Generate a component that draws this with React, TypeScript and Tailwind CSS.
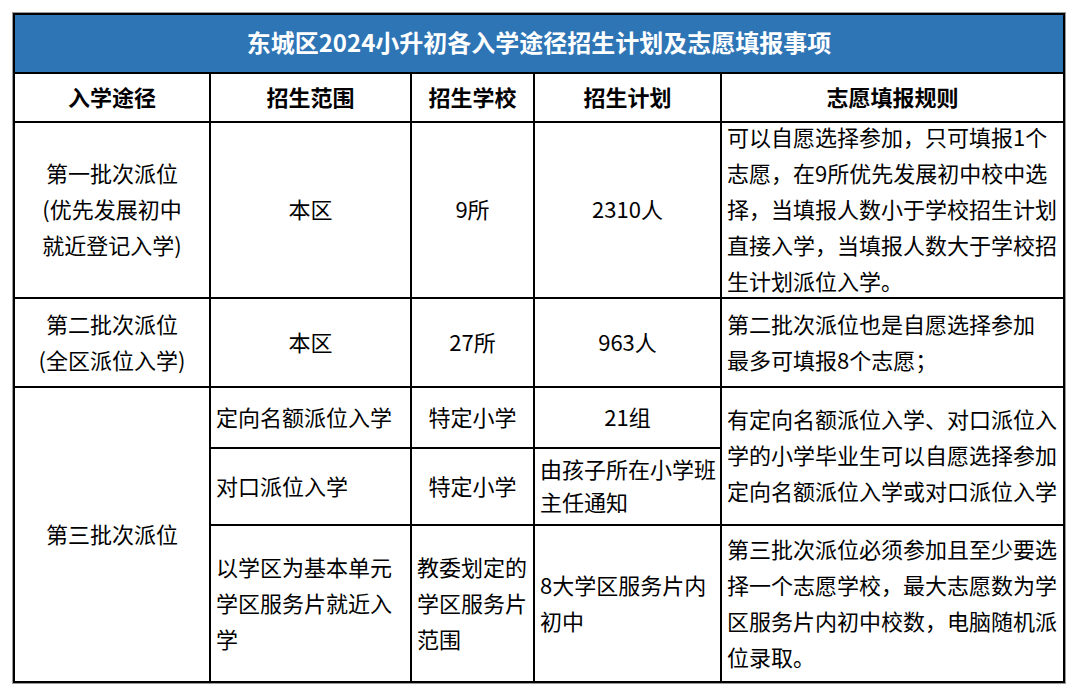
import React from "react";

const font = { fontFamily: '"Noto Sans CJK SC", "Noto Sans", sans-serif' };

function Lines({ lines }: { lines: string[] }) {
  return (
    <div>
      {lines.map((l, i) => (
        <div key={i} className="whitespace-nowrap">
          {l}
        </div>
      ))}
    </div>
  );
}

function C({
  children,
  className = "",
}: {
  children: React.ReactNode;
  className?: string;
}) {
  return (
    <div className={`bg-white flex items-center justify-center text-center pb-[4px] ${className}`}>
      {children}
    </div>
  );
}

function L({
  children,
  className = "",
}: {
  children: React.ReactNode;
  className?: string;
}) {
  return (
    <div className={`bg-white flex items-center justify-start text-left pl-[5px] pb-[4px] ${className}`}>
      {children}
    </div>
  );
}

export default function App() {
  return (
    <div className="w-[1080px] h-[697px] bg-white overflow-hidden" style={font}>
      <div className="ml-[13px] mt-[13px] w-fit grid grid-cols-[194px_199px_121px_185px_341px] grid-rows-[57px_47px_174px_87px_59px_75px_155px] gap-[2px] p-[2px] bg-black text-[22px] leading-[36px] text-black shadow-[0_0_0_1px_#9a9a9a]">
        <div className="col-span-5 bg-[#2e75b6] flex items-center justify-center text-white font-bold text-[24px] pb-[4px]">
          东城区2024小升初各入学途径招生计划及志愿填报事项
        </div>

        <C className="font-bold">入学途径</C>
        <C className="font-bold">招生范围</C>
        <C className="font-bold">招生学校</C>
        <C className="font-bold">招生计划</C>
        <C className="font-bold">志愿填报规则</C>

        <C>
          <Lines lines={["第一批次派位", "(优先发展初中", "就近登记入学)"]} />
        </C>
        <C>本区</C>
        <C>9所</C>
        <C>2310人</C>
        <L>
          <Lines
            lines={[
              "可以自愿选择参加，只可填报1个",
              "志愿，在9所优先发展初中校中选",
              "择，当填报人数小于学校招生计划",
              "直接入学，当填报人数大于学校招",
              "生计划派位入学。",
            ]}
          />
        </L>

        <C>
          <Lines lines={["第二批次派位", "(全区派位入学)"]} />
        </C>
        <C>本区</C>
        <C>27所</C>
        <C>963人</C>
        <L>
          <Lines lines={["第二批次派位也是自愿选择参加", "最多可填报8个志愿；"]} />
        </L>

        <C className="row-span-3">第三批次派位</C>
        <L>定向名额派位入学</L>
        <C>特定小学</C>
        <C>21组</C>
        <L className="row-span-2">
          <Lines
            lines={[
              "有定向名额派位入学、对口派位入",
              "学的小学毕业生可以自愿选择参加",
              "定向名额派位入学或对口派位入学",
            ]}
          />
        </L>

        <L>对口派位入学</L>
        <C>特定小学</C>
        <L className="leading-[33px]">
          <Lines lines={["由孩子所在小学班", "主任通知"]} />
        </L>

        <L>
          <Lines lines={["以学区为基本单元", "学区服务片就近入", "学"]} />
        </L>
        <L className="pl-[4px]">
          <Lines lines={["教委划定的", "学区服务片", "范围"]} />
        </L>
        <L>
          <Lines lines={["8大学区服务片内", "初中"]} />
        </L>
        <L>
          <Lines
            lines={[
              "第三批次派位必须参加且至少要选",
              "择一个志愿学校，最大志愿数为学",
              "区服务片内初中校数，电脑随机派",
              "位录取。",
            ]}
          />
        </L>
      </div>
    </div>
  );
}
